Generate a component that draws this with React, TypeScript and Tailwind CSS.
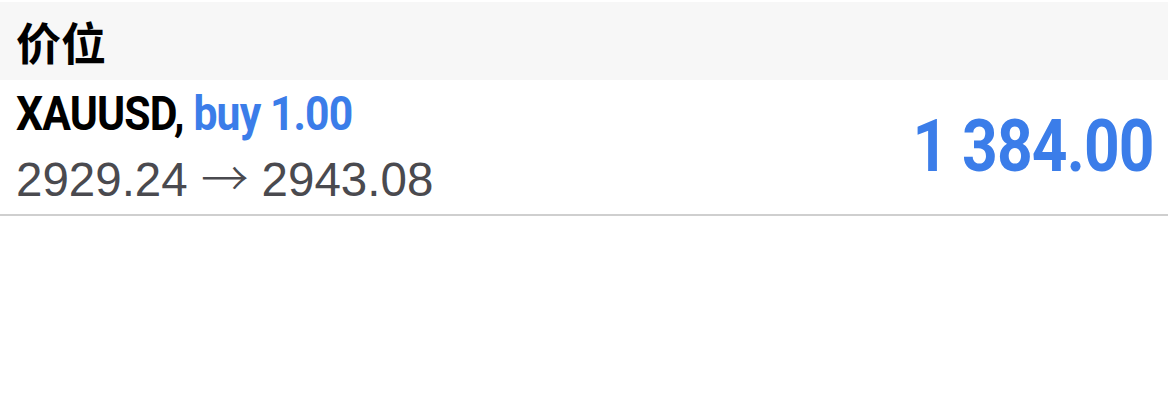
import React from "react";

const App: React.FC = () => (
  <div className="w-[1170px] h-[406px] bg-white pt-[2px] pr-[2px]">
    <div className="h-[78px] bg-[#f7f7f7] flex items-center px-4">
      <span className="text-[45px] font-bold text-black font-['Noto_Sans_CJK_SC',sans-serif] leading-none">
        价位
      </span>
    </div>
    <div className="h-[136px] border-b-2 border-[#cfcfcf] flex items-center justify-between pl-4 pr-[14px]">
      <div className="flex flex-col">
        <div className="text-[48px] font-bold leading-none font-['Roboto',sans-serif] tracking-[-1px] origin-left scale-x-[0.89] whitespace-nowrap">
          <span className="text-black">XAUUSD,</span>{" "}
          <span className="text-[#3b7de9]">buy 1.00</span>
        </div>
        <div className="mt-[14px] text-[47.5px] leading-none text-[#4a4a4f] font-['Liberation_Sans',sans-serif] whitespace-nowrap">
          2929.24 <span className="font-['Noto_Sans_CJK_SC',sans-serif] font-light">→</span> 2943.08
        </div>
      </div>
      <div className="text-[72px] font-bold leading-none text-[#3b7de9] font-['Roboto',sans-serif] tracking-[-1px] origin-right scale-x-[0.865] whitespace-nowrap">
        1 384.00
      </div>
    </div>
  </div>
);

export default App;
